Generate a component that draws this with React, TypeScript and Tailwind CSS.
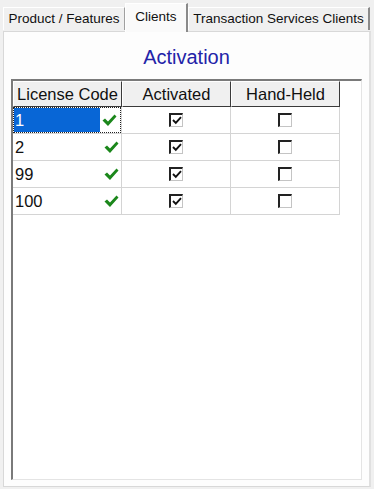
import React from 'react';

const rows = [
  { code: '1', activated: true, handHeld: false },
  { code: '2', activated: true, handHeld: false },
  { code: '99', activated: true, handHeld: false },
  { code: '100', activated: true, handHeld: false },
];

const GreenCheck = () => (
  <svg width="15" height="13" viewBox="0 0 15 13" className="shrink-0">
    <path d="M0.5 6.5 L3 4.5 L6 7.5 L12.5 0.5 L14.5 2.5 L6 12 Z" fill="#1b871b" />
  </svg>
);

const Box = ({ checked }: { checked: boolean }) => (
  <div className="w-[14px] h-[14px] bg-white border-t-2 border-l-2 border-t-[#222] border-l-[#222] border-b border-r border-b-[#c4c4c4] border-r-[#c4c4c4] flex items-center justify-center">
    {checked && (
      <svg width="10" height="9" viewBox="0 0 10 9">
        <path d="M1 4 L3.8 6.8 L9 1.2" fill="none" stroke="#111" strokeWidth="1.9" />
      </svg>
    )}
  </div>
);

export default function App() {
  return (
    <div className="w-[374px] h-[489px] bg-[#f0f0f0] flex flex-col font-['Liberation_Sans',Arial,sans-serif] text-black">
      {/* tabs */}
      <div className="h-[31px] flex items-end pl-[3px] shrink-0">
        <div className="h-[23px] w-[122px] border-t border-l border-t-white border-l-white border-r border-r-[#a0a0a0] flex items-center justify-center text-[13.5px] text-[#111] mb-[1px]">
          Product / Features
        </div>
        <div className="relative z-10 h-[29px] w-[63px] bg-[#fafafa] border-t border-l border-t-white border-l-white border-r-2 border-r-[#8a8a8a] flex items-start justify-center pt-[3px] text-[13.5px] text-[#111] -mb-[1px]">
          Clients
        </div>
        <div className="h-[23px] w-[182px] border-t border-l border-t-white border-l-white border-r-2 border-r-[#8a8a8a] flex items-center justify-center text-[13.5px] text-[#111] mb-[1px]">
          Transaction Services Clients
        </div>
      </div>

      {/* panel */}
      <div className="mx-[3px] w-[368px] h-[456px] bg-[#fdfdfd] border border-[#d8d8d8] border-r-2 border-r-[#e0e0e0] flex flex-col">
        <div className="h-[47px] flex items-center justify-center text-[20px] text-[#2323a8] pt-[3px]">
          Activation
        </div>

        <div className="ml-[7px] w-[351px] h-[401px] bg-white border-t-2 border-l-2 border-t-[#7a7a7a] border-l-[#7a7a7a] border-b border-r border-b-[#e4e4e4] border-r-[#e4e4e4] flex flex-col">
          {/* header */}
          <div className="flex h-[26px] shrink-0">
            {['License Code', 'Activated', 'Hand-Held'].map((h) => (
              <div
                key={h}
                className="w-[109px] h-[26px] bg-[#f0f0f0] border-t border-l border-t-white border-l-white border-r border-b border-r-[#3a3a3a] border-b-[#3a3a3a] flex items-center justify-center text-[16.5px] text-[#111] leading-none whitespace-nowrap"
              >
                {h}
              </div>
            ))}
          </div>

          {/* rows */}
          {rows.map((r, i) => (
            <div key={r.code} className="flex h-[27px] shrink-0">
              <div className="w-[109px] h-[27px] border-r border-b border-r-[#d4d4d4] border-b-[#d4d4d4]">
                {i === 0 ? (
                  <div className="h-full w-full border border-dotted border-[#222] flex items-center">
                    <div className="h-full w-[86px] bg-[#0866d6] text-white text-[16.5px] flex items-center pl-[1px]">
                      {r.code}
                    </div>
                    <div className="flex-1 flex items-center justify-center pr-[1px]">
                      <GreenCheck />
                    </div>
                  </div>
                ) : (
                  <div className="h-full w-full flex items-center pl-[2px]">
                    <span className="w-[86px] text-[16.5px] text-[#111]">{r.code}</span>
                    <div className="flex-1 flex items-center justify-center">
                      <GreenCheck />
                    </div>
                  </div>
                )}
              </div>
              <div className="w-[109px] h-[27px] border-r border-b border-r-[#d4d4d4] border-b-[#d4d4d4] flex items-center justify-center">
                <Box checked={r.activated} />
              </div>
              <div className="w-[109px] h-[27px] border-r border-b border-r-[#d4d4d4] border-b-[#d4d4d4] flex items-center justify-center">
                <Box checked={r.handHeld} />
              </div>
            </div>
          ))}
        </div>
      </div>
    </div>
  );
}
